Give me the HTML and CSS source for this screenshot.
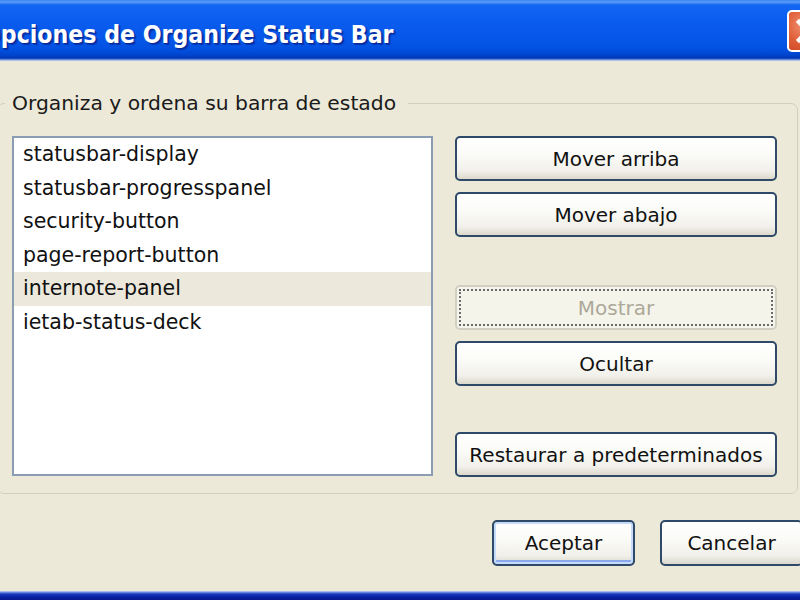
FILE: index.html
```html
<!DOCTYPE html>
<html lang="es">
<head>
<meta charset="utf-8">
<title>Opciones de Organize Status Bar</title>
<link rel="stylesheet" href="styles.css">
</head>
<body>
<div class="window">
  <div class="titlebar">
    <div class="title">Opciones de Organize Status Bar</div>
    <div class="close" aria-label="Cerrar">
      <svg width="42" height="42" viewBox="0 0 42 42"><path d="M12 12 L30 30 M30 12 L12 30" stroke="#fff" stroke-width="4.5" stroke-linecap="square"/></svg>
    </div>
  </div>
  <div class="content">
    <fieldset class="group">
      <legend>Organiza y ordena su barra de estado</legend>
      <div class="group-inner">
        <ul class="listbox">
          <li>statusbar-display</li>
          <li>statusbar-progresspanel</li>
          <li>security-button</li>
          <li>page-report-button</li>
          <li class="selected">internote-panel</li>
          <li>ietab-status-deck</li>
        </ul>
        <div class="actions">
          <button class="btn btn-up">Mover arriba</button>
          <button class="btn btn-down">Mover abajo</button>
          <button class="btn btn-show" disabled>Mostrar</button>
          <button class="btn btn-hide">Ocultar</button>
          <button class="btn btn-reset">Restaurar a predeterminados</button>
        </div>
      </div>
    </fieldset>
    <div class="footer">
      <button class="btn btn-default">Aceptar</button>
      <button class="btn">Cancelar</button>
    </div>
  </div>
  <div class="frame-bottom"></div>
</div>
</body>
</html>
```

FILE: styles.css
```css
* { box-sizing: border-box; }
html, body { margin: 0; padding: 0; }
body {
  width: 800px;
  height: 600px;
  overflow: hidden;
  background: #ECE9D8;
  font-family: "DejaVu Sans", sans-serif;
  font-size: 20px;
  color: #111;
}
.window {
  width: 800px;
  height: 600px;
  display: flex;
  flex-direction: column;
  overflow: hidden;
}
.titlebar {
  height: 61px;
  flex: 0 0 61px;
  display: flex;
  align-items: flex-start;
  overflow: hidden;
  background: linear-gradient(to bottom,
    #3A86F2 0px, #5A9CF8 2px, #1466F2 5px, #0A5DEF 20px,
    #0656E8 40px, #0250E0 50px, #0044CC 55px, #0037B3 58px,
    #2F5FC8 59px, #8AAEEA 60px, #C9D3E6 61px);
}
.title {
  flex: 1 1 auto;
  min-width: 0;
  margin-left: -18px;
  padding-top: 19px;
  font-family: "DejaVu Sans Condensed", "DejaVu Sans", sans-serif;
  font-stretch: condensed;
  font-weight: bold;
  font-size: 24.6px;
  line-height: 32px;
  color: #fff;
  white-space: nowrap;
  text-shadow: 1px 1px 0 #0A2A9A, 2px 2px 1px rgba(0,20,120,.5);
}
.close {
  flex: 0 0 42px;
  width: 42px;
  height: 42px;
  margin-top: 10px;
  margin-right: -29px;
  border: 2px solid #fff;
  border-radius: 5px;
  background: radial-gradient(circle at 35% 35%, #F09070 0, #E0603A 45%, #C8401C 100%);
  display: flex;
  align-items: center;
  justify-content: center;
}
.close svg { display: block; margin: -2px; }
.content {
  flex: 1 1 auto;
  padding-top: 30px;
  display: flex;
  flex-direction: column;
}
.group {
  margin: 0 0 0 -3px;
  width: 801px;
  border: 1px solid #D0D0BF;
  border-radius: 7px;
  padding: 21px 20px 16px 14px;
}
.group legend {
  margin-left: -7px;
  padding: 0 12px 0 7px;
  line-height: 24px;
  font-size: 20.3px;
  color: #1a1a1a;
}
.group-inner {
  display: flex;
  gap: 22px;
  align-items: flex-start;
}
.listbox {
  list-style: none;
  margin: 0;
  padding: 0;
  width: 421px;
  height: 340px;
  border: 2px solid #8A9DB3;
  background: #fff;
}
.listbox li {
  height: 33.6px;
  line-height: 33.6px;
  padding-left: 9px;
  white-space: nowrap;
  font-size: 20.5px;
}
.listbox li.selected { background: #ECE9DC; }
.actions {
  width: 322px;
  display: flex;
  flex-direction: column;
}
.btn {
  font-family: inherit;
  font-size: 20px;
  color: #111;
  height: 45px;
  border: 2px solid #2E4A68;
  border-radius: 5px;
  background: linear-gradient(to bottom, #FFFFFF 0%, #FBFBF8 40%, #F1F0EA 80%, #DCD8CC 100%);
  padding: 0;
  cursor: default;
}
.btn-down { margin-top: 11px; }
.btn-show {
  margin-top: 48px;
  border-color: #D2CFC2;
  background: #F5F4EB;
  color: #ACA899;
  outline: 2px dotted #6A6A6A;
  outline-offset: -6px;
}
.btn-hide { margin-top: 11px; }
.btn-reset { margin-top: 46px; }
.footer {
  display: flex;
  justify-content: flex-end;
  gap: 25px;
  margin-top: 26px;
  margin-right: -3px;
}
.footer .btn {
  width: 143px;
  height: 46px;
}
.btn-default {
  box-shadow: inset 0 0 0 2px #C6DAFA, inset 0 -3px 0 1px #8BA8EC;
}
.frame-bottom {
  flex: 0 0 9px;
  height: 9px;
  background: linear-gradient(to bottom, #C8D6F2 0, #7D9DE4 1px, #1A3BC0 3px, #0A1F9E 6px, #081890 9px);
}
```
